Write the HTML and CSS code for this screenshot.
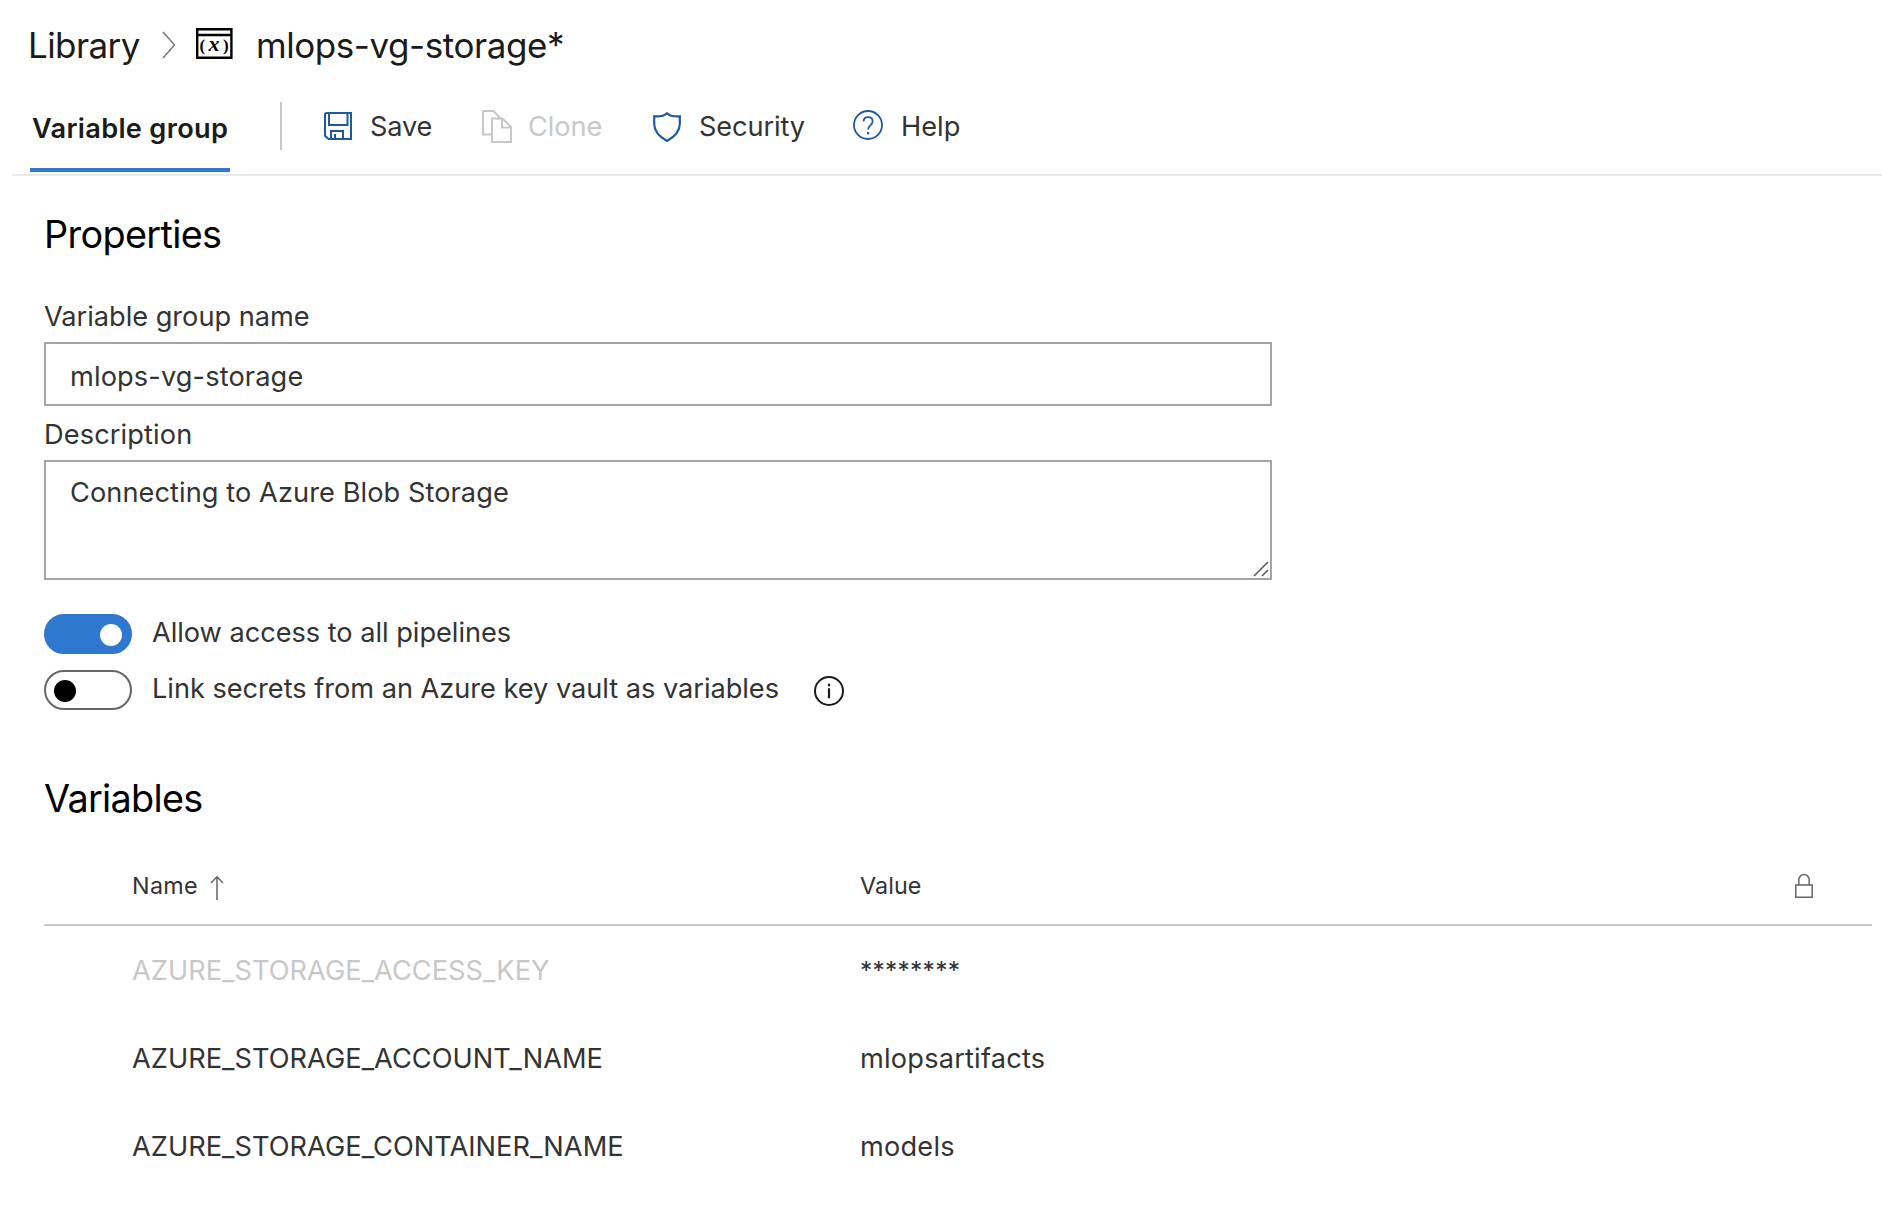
FILE: index.html
```html
<!DOCTYPE html>
<html lang="en">
<head>
<meta charset="utf-8">
<title>mlops-vg-storage - Library</title>
<link rel="stylesheet" href="styles.css">
</head>
<body>
<header class="breadcrumb">
  <span class="crumb">Library</span>
  <svg class="crumb-arrow" width="14" height="28" viewBox="0 0 14 28"><path d="M1 1l11.500 13L1 27" fill="none" stroke="#767676" stroke-width="1.500"/></svg>
  <svg class="group-icon" width="37" height="32" viewBox="0 0 37 32">
    <path d="M1.200 1.200h34.200v28.600H1.200zM0 7h36.600" fill="none" stroke="#000" stroke-width="2.400"/>
    <text class="group-icon-paren" x="3.600" y="22.500">(</text>
    <text class="group-icon-x" x="12.600" y="22.500">x</text>
    <text class="group-icon-paren" x="27" y="22.500">)</text>
  </svg>
  <span class="crumb crumb-current">mlops-vg-storage*</span>
</header>

<nav class="toolbar">
  <div class="tab">Variable group</div>
  <div class="divider"></div>
  <div class="action save">
    <svg width="32" height="32" viewBox="0 0 32 32" fill="none" stroke="#1f5a9e" stroke-width="2"><path d="M4.600 3H29v26H6.500L3 25.700V4.600Q3 3 4.600 3zM7 3v12h18.500V3M9 29v-8h12v8M13 24v5"/></svg>
    <span>Save</span>
  </div>
  <div class="action clone disabled">
    <svg width="32" height="34" viewBox="0 0 32 34" fill="none" stroke="#c8c8c8" stroke-width="2"><path d="M10.500 25.500H2V2h10.500l6.800 7M11 9.500h10.500L30 18v15H11zM21 9.500V18.500h9"/></svg>
    <span>Clone</span>
  </div>
  <div class="action security">
    <svg width="30" height="32" viewBox="0 0 30 32" fill="none" stroke="#1f5a9e" stroke-width="2.200"><path d="M15 3.200C12.500 5.600 7.500 6.800 2.200 6.300V14C2.200 21 7 26.500 15 31C23 26.500 27.800 21 27.800 14V6.300C22.500 6.800 17.500 5.600 15 3.200z"/></svg>
    <span>Security</span>
  </div>
  <div class="action help">
    <svg width="32" height="32" viewBox="0 0 32 32" fill="none" stroke="#1f5a9e" stroke-width="1.800"><circle cx="16" cy="16" r="14"/><path d="M11.600 12.500c0-2.800 1.900-4.400 4.500-4.400s4.500 1.700 4.500 4.200c0 4-4.500 4.200-4.500 8.200"/><path d="M16.100 23v2.400" stroke-width="2.200"/></svg>
    <span>Help</span>
  </div>
</nav>

<main class="content">
  <h2 class="heading heading-properties">Properties</h2>
  <label class="label label-name" for="group-name">Variable group name</label>
  <input class="field field-name" id="group-name" value="mlops-vg-storage">
  <label class="label label-desc" for="group-desc">Description</label>
  <div class="desc-wrap">
    <textarea class="field field-desc" id="group-desc">Connecting to Azure Blob Storage</textarea>
    <svg class="grip" width="16" height="16" viewBox="0 0 16 16" fill="none" stroke="#555" stroke-width="1.500"><path d="M1 15L15 1M9 15l6-6"/></svg>
  </div>

  <div class="option option-first">
    <span class="switch on"><span class="knob"></span></span>
    <span class="option-text">Allow access to all pipelines</span>
  </div>
  <div class="option">
    <span class="switch"><span class="knob"></span></span>
    <span class="option-text">Link secrets from an Azure key vault as variables</span>
    <svg class="info" width="32" height="32" viewBox="0 0 32 32"><circle cx="16" cy="16" r="14" fill="none" stroke="#1b1b1b" stroke-width="2"/><path d="M16 8.800v2.400M16 13.200v10" stroke="#1b1b1b" stroke-width="2.200"/></svg>
  </div>

  <h2 class="heading heading-variables">Variables</h2>
  <div class="table">
    <div class="row row-head">
      <div class="cell-name"><span class="col-name">Name</span>
        <svg class="sort" width="14" height="26" viewBox="0 0 14 26" fill="none" stroke="#666" stroke-width="1.500"><path d="M7 25V2M1 8l6-6.200L13 8"/></svg>
      </div>
      <div class="cell-value">Value</div>
      <svg class="lock" width="18" height="26" viewBox="0 0 18 26" fill="none" stroke="#666" stroke-width="1.500"><path d="M.8 12h16.400v12.200H.8zM3.800 12V6.800a5.200 5.200 0 0 1 10.400 0V12"/></svg>
    </div>
    <div class="row"><div class="cell-name muted">AZURE_STORAGE_ACCESS_KEY</div><div class="cell-value secret">********</div></div>
    <div class="row"><div class="cell-name">AZURE_STORAGE_ACCOUNT_NAME</div><div class="cell-value wide">mlopsartifacts</div></div>
    <div class="row"><div class="cell-name">AZURE_STORAGE_CONTAINER_NAME</div><div class="cell-value wide">models</div></div>
  </div>
</main>
</body>
</html>
```
FILE: styles.css
```css
* { box-sizing: border-box; }
body {
  margin: 0;
  background: #fff;
  color: #333;
  font-family: Inter, "Liberation Sans", sans-serif;
  font-size: 27.2px;
  overflow: hidden;
}
svg { display: block; flex: none; }
.breadcrumb {
  display: flex;
  align-items: flex-start;
  height: 88px;
  padding: 25px 0 0 28px;
  color: #1b1b1b;
}
.crumb {
  width: 134px;
  font-size: 35px;
  line-height: 40px;
  letter-spacing: -0.6px;
  white-space: nowrap;
}
.crumb-arrow { margin-top: 6px; }
.group-icon { margin: 3px 0 0 20px; }
.group-icon-paren { font: bold 17px "Liberation Serif", serif; }
.group-icon-x { font: italic bold 22px "Liberation Serif", serif; }
.crumb-current { width: auto; margin-left: 23px; letter-spacing: -0.44px; }

.toolbar {
  display: flex;
  align-items: flex-start;
  height: 88px;
  margin-left: 12px;
  padding-left: 18px;
  border-bottom: 2px solid #eaeaea;
}
.tab {
  width: 200px;
  height: 84px;
  padding-left: 2px;
  border-bottom: 4px solid #2f78d0;
  color: #1b1b1b;
  font-weight: 600;
  line-height: 82px;
  letter-spacing: 0.3px;
  white-space: nowrap;
}
.divider { width: 2px; height: 48px; margin: 14px 0 0 50px; background: #c8c8c8; }
.action { display: flex; align-items: center; height: 76px; line-height: 36px; }
.action span { padding-top: 2px; }
.save { width: 159px; margin-left: 40px; gap: 16px; letter-spacing: -0.2px; }
.clone { width: 171px; gap: 15px; letter-spacing: -0.05px; }
.security { width: 199px; gap: 17px; letter-spacing: -0.1px; }
.help { margin-left: 1px; gap: 17px; }
.help svg { margin-bottom: 2px; }
.disabled { color: #c8c8c8; }

.content { display: flex; flex-direction: column; align-items: flex-start; padding-left: 44px; }
.heading { margin: 0; color: #000; font-size: 37.8px; font-weight: 400; line-height: 48px; }
.heading-properties { margin: 34px 0 0; letter-spacing: -0.65px; }
.heading-variables { margin-top: 64px; letter-spacing: -0.7px; }
.label { height: 36px; line-height: 36px; }
.label-name { margin: 41px 0 7px; letter-spacing: -0.02px; }
.label-desc { margin: 11px 0 7px; letter-spacing: 0.12px; }
.field {
  display: block;
  width: 1228px;
  margin: 0;
  border: 2px solid #a6a6a6;
  border-radius: 0;
  outline: 0;
  background: #fff;
  color: #333;
  font-family: inherit;
  font-size: 27.2px;
}
.field-name { height: 64px; padding: 4px 24px 0 24px; letter-spacing: 0.12px; }
.desc-wrap { position: relative; }
.field-desc {
  height: 120px;
  padding: 13px 24px 11px;
  line-height: 36px;
  letter-spacing: 0.07px;
  resize: none;
  overflow: hidden;
}
.grip { position: absolute; right: 3px; bottom: 3px; }
.option { display: flex; align-items: flex-start; height: 40px; margin-top: 16px; }
.option-first { margin-top: 34px; }
.switch {
  display: flex;
  align-items: center;
  width: 88px;
  height: 40px;
  padding: 2px 8px 0;
  border: 2px solid #666;
  border-radius: 20px;
}
.knob { width: 22px; height: 22px; border-radius: 50%; background: #000; }
.on { justify-content: flex-end; border-color: #2f78d0; background: #2f78d0; }
.on .knob { background: #fff; }
.option-text { margin-left: 20px; line-height: 38px; letter-spacing: -0.03px; white-space: nowrap; }
.info { margin: 5px 0 0 34px; }

.table { width: 1828px; }
.row { display: flex; align-items: center; height: 88px; padding: 2px 0 0 88px; line-height: 36px; }
.row-head { height: 104px; padding-top: 26px; border-bottom: 2px solid #c8c8c8; font-size: 23.3px; }
.cell-name { display: flex; flex: none; align-items: center; width: 728px; letter-spacing: 0.03px; }
.col-name { letter-spacing: 0.35px; }
.sort { margin: 4px 0 0 12px; }
.cell-value { flex: none; width: 935px; }
.row-head .cell-value { letter-spacing: 0.1px; }
.muted { color: #c8c8c8; }
.secret { font-size: 24.5px; letter-spacing: 0.25px; padding-bottom: 2px; }
.wide { letter-spacing: 0.2px; }
```
